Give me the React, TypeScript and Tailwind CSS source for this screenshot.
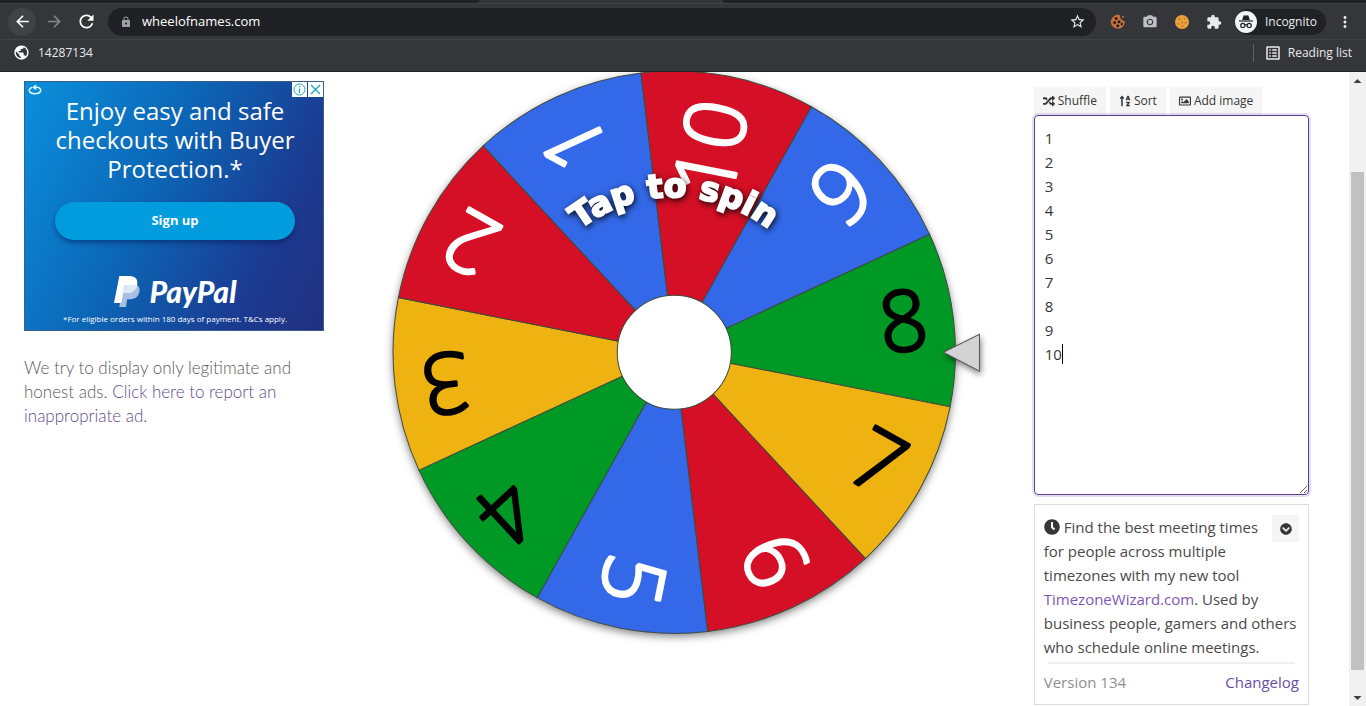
import { useState } from "react";
import {
  FaChevronCircleDown,
  FaClock,
  FaRandom,
  FaRegImage,
  FaSortAlphaUp,
} from "react-icons/fa";
import {
  MdArrowBack,
  MdArrowForward,
  MdCameraAlt,
  MdExtension,
  MdListAlt,
  MdLock,
  MdMoreVert,
  MdPublic,
  MdRefresh,
  MdStarBorder,
} from "react-icons/md";

const RED = "#d50f25";
const BLUE = "#3369e8";
const GREEN = "#009925";
const YELLOW = "#eeb211";

const SLICES = [
  { label: "8", fill: GREEN, text: "#000" },
  { label: "7", fill: YELLOW, text: "#000" },
  { label: "6", fill: RED, text: "#fff" },
  { label: "5", fill: BLUE, text: "#fff" },
  { label: "4", fill: GREEN, text: "#000" },
  { label: "3", fill: YELLOW, text: "#000" },
  { label: "2", fill: RED, text: "#fff" },
  { label: "1", fill: BLUE, text: "#fff" },
  { label: "10", fill: RED, text: "#fff" },
  { label: "9", fill: BLUE, text: "#fff" },
];

const STEP = 360 / SLICES.length;
const SPIN = -6.8;
const RADIUS = 281;
const HUB = 57;

// one slice centred on the positive x axis, turned into place by its group
const HALF = (STEP / 2) * (Math.PI / 180);
const EDGE_X = RADIUS * Math.cos(HALF);
const EDGE_Y = RADIUS * Math.sin(HALF);
const SLICE_PATH = `M0 0L${EDGE_X} ${-EDGE_Y}A${RADIUS} ${RADIUS} 0 0 1 ${EDGE_X} ${EDGE_Y}Z`;

function CookieIcon({ color, spots }: { color: string; spots: string }) {
  return (
    <svg viewBox="0 0 16 16" className="size-4" aria-hidden="true">
      <circle cx="8" cy="8" r="7" fill={color} />
      <g fill={spots}>
        <circle cx="5.5" cy="5" r="1.2" />
        <circle cx="10.5" cy="4.5" r="1" />
        <circle cx="8" cy="8.5" r="1.1" />
        <circle cx="4.3" cy="9.7" r="1" />
        <circle cx="11.8" cy="8.8" r="1.1" />
        <circle cx="8.5" cy="12.3" r="1" />
      </g>
    </svg>
  );
}

function BittenCookieIcon() {
  return (
    <svg viewBox="0 0 16 16" className="size-4" aria-hidden="true">
      <path d="M10 1.200A7 7 0 1 0 14.800 7q-1.800.6-2.600-1.200Q9.600 5 10 1.200z" fill="#c4713d" />
      <g fill="#2b1c18">
        <circle cx="6.2" cy="4.5" r="1.5" />
        <circle cx="9" cy="7.8" r="1.5" />
        <circle cx="4.6" cy="8.6" r="1.5" />
        <circle cx="7.8" cy="11.8" r="1.5" />
        <circle cx="11.8" cy="10" r="1.2" />
        <circle cx="13" cy="3" r="1" fill="#c4713d" />
      </g>
    </svg>
  );
}

function IncognitoIcon() {
  return (
    <svg viewBox="0 0 22 22" className="size-[22px]" aria-hidden="true">
      <circle cx="11" cy="11" r="11" fill="#f1f3f4" />
      <path d="M7.2 9 8.5 4.8q.3-.7 1-.5l1.5.4 1.5-.4q.7-.2 1 .5L14.8 9z" fill="#202124" />
      <path d="M4 9.400h14v1.200H4z" fill="#202124" />
      <g fill="none" stroke="#202124" strokeWidth="1.2">
        <circle cx="7.8" cy="14.4" r="2.1" />
        <circle cx="14.2" cy="14.4" r="2.1" />
        <path d="M9.900 14q1.100-.8 2.200 0" />
      </g>
    </svg>
  );
}

function BrowserBar() {
  return (
    <header className="bg-[#35363a] font-['Open_Sans',sans-serif] text-[#e8eaed]">
      <div className="flex h-[3px] bg-[#202124]">
        <div className="ml-[35%] w-[18%] rounded-t bg-[#35363a]" />
      </div>
      <div className="flex h-9 items-center border-t border-[#414246] pr-3 pl-2">
        <button type="button" aria-label="Back" className="flex size-7 items-center justify-center rounded-full bg-[#414246] text-white">
          <MdArrowBack className="size-[19px]" />
        </button>
        <button type="button" aria-label="Forward" className="ml-1 flex size-7 items-center justify-center text-[#85868a]">
          <MdArrowForward className="size-[19px]" />
        </button>
        <button type="button" aria-label="Reload" className="ml-1 flex size-7 items-center justify-center text-white">
          <MdRefresh className="size-[21px]" />
        </button>
        <div className="ml-2 flex h-7 flex-1 items-center rounded-full bg-[#202124] pr-2 pl-3">
          <MdLock className="size-3 text-[#9aa0a6]" />
          <input
            type="text"
            aria-label="Address"
            defaultValue="wheelofnames.com"
            className="ml-[10px] min-w-0 flex-1 bg-transparent text-[13px] text-white outline-none"
          />
          <button type="button" aria-label="Bookmark this page" className="flex size-5 items-center justify-center">
            <MdStarBorder className="size-[17px]" />
          </button>
        </div>
        <div className="ml-[14px] flex items-center gap-4">
          <BittenCookieIcon />
          <MdCameraAlt className="size-4 text-[#bdc1c6]" />
          <CookieIcon color="#eba23c" spots="#c47a28" />
          <MdExtension className="size-4 text-[#e8eaed]" />
        </div>
        <button type="button" className="ml-[13px] flex h-[26px] items-center gap-2 rounded-full bg-[#202124] pr-[9px] text-[12px]">
          <IncognitoIcon />
          Incognito
        </button>
        <button type="button" aria-label="Menu" className="ml-[10px] flex items-center justify-center">
          <MdMoreVert className="size-[18px]" />
        </button>
      </div>
      <nav className="flex h-[33px] items-center justify-between border-t border-b border-t-[#414246] border-b-[#202124] pr-[14px] pb-[6px] pl-[13px] text-[12px]">
        <a href="#" className="flex items-center gap-2">
          <MdPublic className="size-[17px] text-white" />
          14287134
        </a>
        <button type="button" className="flex items-center gap-[6px] border-l border-[#5f6368] pl-[10px]">
          <MdListAlt className="size-[18px]" />
          Reading list
        </button>
      </nav>
    </header>
  );
}

function PayPalAd() {
  return (
    <section
      aria-label="Advertisement"
      className="relative flex h-[250px] w-[300px] flex-col items-center border border-[#3c5f8a] bg-linear-[115deg,#0a90dc_0%,#0c66b6_42%,#1b3a90_78%,#21307f_100%] pl-0.5 text-white"
    >
      <svg viewBox="0 0 14 10" className="absolute top-[3px] left-[3px] h-[10px] w-[14px]" fill="none" stroke="#dff6ff" strokeWidth="1.6" aria-hidden="true">
        <path d="M4.500 2.200C-.8 3.800.8 8.700 7 8.700s7.800-4.900 2.500-6.500H6" />
        <path d="M8 0 5.800 2.200 8 4.400" />
      </svg>
      <div className="absolute top-0 right-0 flex gap-px">
        <button type="button" aria-label="Ad information" className="flex size-[15px] items-center justify-center bg-white">
          <svg viewBox="0 0 15 15" className="size-[15px]" fill="none" stroke="#18a6c4" aria-hidden="true">
            <circle cx="7.5" cy="7.5" r="5.5" />
            <path d="M7.500 6.500V11M7.500 4v1.300" strokeWidth="1.3" />
          </svg>
        </button>
        <button type="button" aria-label="Close ad" className="flex size-[15px] items-center justify-center bg-white">
          <svg viewBox="0 0 15 15" className="size-[15px]" fill="none" stroke="#18a6c4" strokeWidth="1.3" aria-hidden="true">
            <path d="m3 3 9 9M12 3l-9 9" />
          </svg>
        </button>
      </div>
      <p className="mt-[14px] text-center font-['Open_Sans',sans-serif] text-[24px] leading-[29px]">
        Enjoy easy and safe
        <br />
        checkouts with Buyer
        <br />
        Protection.*
      </p>
      <button type="button" className="mt-[19px] h-[38px] w-60 rounded-full bg-[#009cde] font-['Open_Sans',sans-serif] text-[13px] font-bold shadow-[0_3px_5px_rgba(0,20,80,0.45)]">
        Sign up
      </button>
      <div className="mt-[35px] flex items-center gap-[10px]">
        <svg viewBox="0 0 26 31" className="h-[31px] w-[26px]" aria-hidden="true">
          <path d="M9 8h9.500c5.500 0 8 3.200 6.800 8.200-1.200 5-4.800 7-9.800 7h-2.300L12 31H5.300z" fill="#a9bfe2" />
          <path d="M5.300 0h10.500c5.700 0 8.500 3.500 7.300 8.800-1.200 5.700-5 8.300-10.600 8.300H9.200L7.300 27H0z" fill="#fff" />
          <path d="M9.800 9h8.300c2 0 3.500.4 4.700 1.300-1.600 4.700-5.200 6.800-10.300 6.800H9.200L8 23z" fill="#dfe7f5" />
        </svg>
        <span className="font-['Lato',sans-serif] text-[30px] leading-8 font-black italic">PayPal</span>
      </div>
      <p className="mt-[6px] font-['Open_Sans',sans-serif] text-[8px] leading-3">
        *For eligible orders within 180 days of payment. T&amp;Cs apply.
      </p>
    </section>
  );
}

function Wheel() {
  return (
    <svg viewBox="-337 -280 674 634" className="block w-full overflow-hidden" role="img" aria-label="Tap to spin">
      <defs>
        <path id="hint-arc" d="M-155 0A155 155 0 0 1 155 0" />
      </defs>
      <circle r={RADIUS} fill="#fff" className="drop-shadow-[0_3px_4px_rgba(0,0,0,0.5)]" />
      {SLICES.map((slice, i) => (
        <g key={slice.label} transform={`rotate(${SPIN + i * STEP})`}>
          <path d={SLICE_PATH} fill={slice.fill} stroke="#3d4a3d" />
          <text
            x="255"
            y="26"
            fill={slice.text}
            stroke={slice.text}
            strokeWidth="3"
            strokeLinejoin="round"
            textAnchor="end"
            className="font-['Open_Sans',sans-serif] text-[84px] font-light"
          >
            {slice.label}
          </text>
        </g>
      ))}
      <circle r={HUB} fill="#fff" stroke="#3d4a3d" />
      <text
        fill="#fff"
        stroke="#fff"
        strokeWidth="2"
        textAnchor="middle"
        className="font-['DejaVu_Sans',sans-serif] text-[33px] font-bold drop-shadow-[1px_2px_3px_rgba(0,0,0,0.9)]"
      >
        <textPath href="#hint-arc" startOffset="50%">
          Tap to spin
        </textPath>
      </text>
      <path d="M269 0 305-18V19z" fill="#d3d3d3" stroke="#555" className="drop-shadow-[1px_3px_3px_rgba(0,0,0,0.5)]" />
    </svg>
  );
}

const TOOLS = [
  { label: "Shuffle", icon: FaRandom },
  { label: "Sort", icon: FaSortAlphaUp },
  { label: "Add image", icon: FaRegImage },
];

function EntriesPanel() {
  const [entries, setEntries] = useState("1\n2\n3\n4\n5\n6\n7\n8\n9\n10");

  return (
    <aside className="pt-[15px] pr-10 pl-[22px] font-['Open_Sans',sans-serif]">
      <div className="flex gap-1">
        {TOOLS.map(({ label, icon: Icon }) => (
          <button key={label} type="button" className="flex h-7 items-center gap-[3px] bg-[#f5f5f5] px-[9px] text-[12px] text-[#363636]">
            <Icon className="size-3" />
            {label}
          </button>
        ))}
      </div>

      <div className="relative">
        <textarea
          aria-label="Names"
          value={entries}
          onChange={(e) => setEntries(e.target.value)}
          className="block h-[380px] w-full resize rounded border border-[#5b3f8f] px-[10px] py-[10px] text-[15px] leading-6 text-[#363636] shadow-[0_0_0_2px_rgba(120,90,190,0.2)] outline-none"
        />
        {/* text cursor after the last entry */}
        <span className="absolute top-[229px] left-7 h-5 w-px bg-black" />
      </div>

      <div className="mt-[9px] border border-[#dcdcdc] px-[9px] pt-[10px] pb-[10px] text-[15px] leading-6 text-[#4a4a4a]">
        <button type="button" aria-label="Collapse" className="float-right flex size-[27px] items-center justify-center bg-[#f5f5f5] text-[#363636]">
          <FaChevronCircleDown className="size-3" />
        </button>
        <p>
          <FaClock className="mr-1 inline size-4 align-[-2px] text-[#363636]" />
          Find the best meeting times for people across multiple timezones with my new tool{" "}
          <a href="#" className="text-[#7e57b5]">TimezoneWizard.com</a>. Used by business people, gamers and others who
          schedule online meetings.
        </p>
        <hr className="mx-1 mt-[3px] mb-[6px] border-t-2 border-[#efefef]" />
        <div className="flex justify-between">
          <span className="text-[#8f8f8f]">Version 134</span>
          <a href="#" className="text-[#6b4fa3]">Changelog</a>
        </div>
      </div>
    </aside>
  );
}

function Scrollbar() {
  return (
    <div className="flex w-[17px] shrink-0 flex-col items-center bg-[#f1f1f1]">
      <svg viewBox="0 0 17 17" className="size-[17px]" aria-hidden="true">
        <path d="m4.500 11 4-4 4 4z" fill="#404040" />
      </svg>
      <div className="flex-[83]" />
      <div className="w-[13px] flex-[498] bg-[#c1c1c1]" />
      <div className="flex-[19]" />
      <svg viewBox="0 0 17 17" className="size-[17px]" aria-hidden="true">
        <path d="m4.500 7 4 4 4-4z" fill="#404040" />
      </svg>
    </div>
  );
}

export default function App() {
  return (
    <div className="flex min-h-screen flex-col bg-white">
      <BrowserBar />
      <div className="flex flex-1">
        <main className="grid flex-1 grid-cols-[1fr_2fr_1fr]">
          <div className="pt-[9px] pl-6">
            <PayPalAd />
            <p className="mt-[25px] max-w-[300px] font-['Lato',sans-serif] text-[17px] leading-6 font-light text-[#5a5a5a]">
              We try to display only legitimate and honest ads.{" "}
              <a href="#" className="text-[#5f4a8c]">Click here to report an inappropriate ad.</a>
            </p>
          </div>
          <Wheel />
          <EntriesPanel />
        </main>
        <Scrollbar />
      </div>
    </div>
  );
}
